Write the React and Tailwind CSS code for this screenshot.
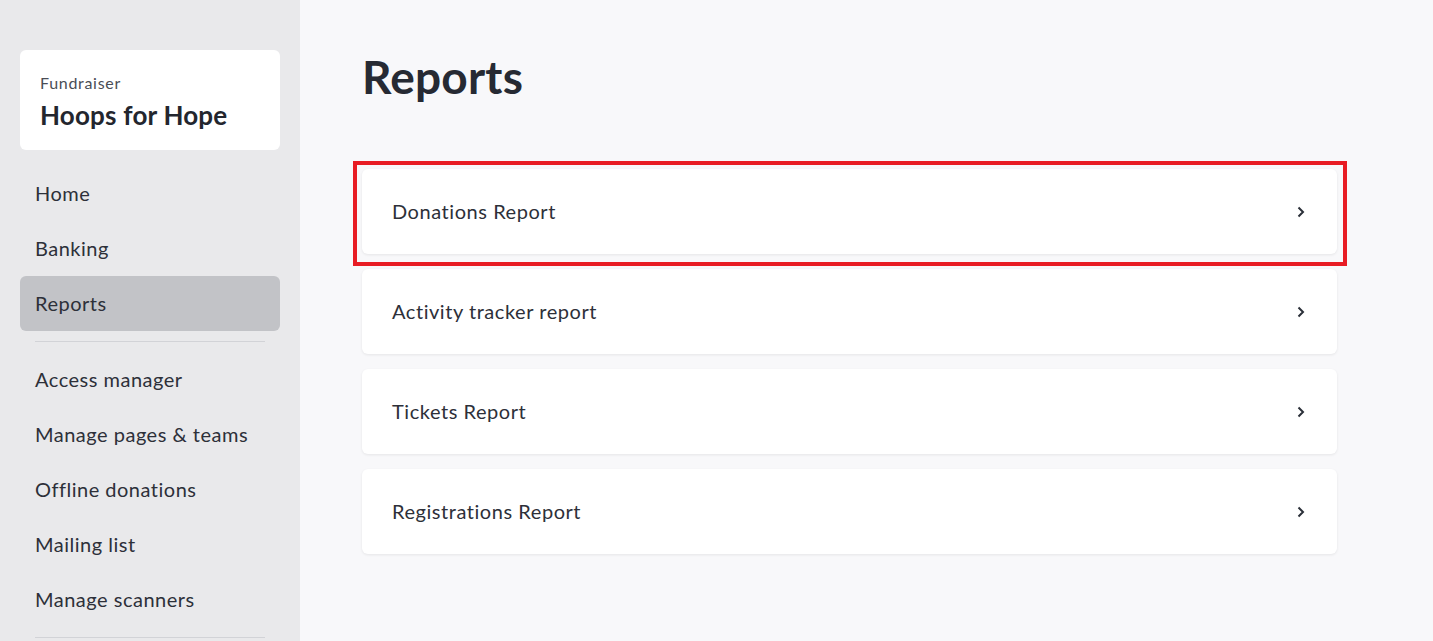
import React from 'react';

const navTop = ['Home', 'Banking', 'Reports'];
const navBottom = ['Access manager', 'Manage pages & teams', 'Offline donations', 'Mailing list', 'Manage scanners'];
const reports = ['Donations Report', 'Activity tracker report', 'Tickets Report', 'Registrations Report'];

const Chevron = () => (
  <svg width="8" height="12" viewBox="0 0 8 12" fill="none">
    <path d="M1.5 1.5L6 6l-4.5 4.5" stroke="#2a2f38" strokeWidth="2" />
  </svg>
);

const NavItem = ({ label, active }) => (
  <div
    className={`h-[55px] flex items-center px-[15px] pb-[2px] rounded-md text-[20px] tracking-[0.5px] text-[#2d3039] ${
      active ? 'bg-[#c2c3c7]' : ''
    }`}
  >
    {label}
  </div>
);

export default function App() {
  return (
    <div className="flex h-[641px] overflow-hidden font-['Lato',sans-serif]">
      {/* Sidebar */}
      <aside className="w-[300px] shrink-0 bg-[#e9e9eb] px-5 pt-[50px]">
        <div className="bg-white rounded-md h-[100px] px-5 pt-[24px]">
          <div className="text-[16px] tracking-[0.7px] text-[#4a4d55] leading-[18px]">Fundraiser</div>
          <div className="text-[26px] font-bold text-[#23262e] leading-[32px] mt-[7px] tracking-[0.2px]">Hoops for Hope</div>
        </div>
        <nav className="mt-[16px]">
          {navTop.map((item) => (
            <NavItem key={item} label={item} active={item === 'Reports'} />
          ))}
          <div className="mx-[15px] my-[10px] border-t border-[#d2d3d7]" />
          {navBottom.map((item) => (
            <NavItem key={item} label={item} />
          ))}
          <div className="mx-[15px] mt-[10px] border-t border-[#d2d3d7]" />
        </nav>
      </aside>

      {/* Main */}
      <main className="flex-1 bg-[#f8f8fa] pl-[62px] pr-[96px] pt-[50px]">
        <h1 className="text-[46px] font-bold text-[#262a33] leading-[54px] tracking-[0.2px]">Reports</h1>
        <div className="mt-[65px] flex flex-col gap-[15px]">
          {reports.map((r, i) => (
            <div
              key={r}
              className="relative h-[85px] bg-white rounded-md shadow-[0_1px_3px_rgba(0,0,0,0.08)] flex items-center justify-between pl-[30px] pr-[32px]"
            >
              <span className="text-[20px] tracking-[0.55px] text-[#2d3039] pb-[2px]">{r}</span>
              <Chevron />
              {i === 0 && (
                <div className="absolute -left-[9px] -right-[10px] -top-[8px] -bottom-[12px] border-4 border-[#e81c24] pointer-events-none" />
              )}
            </div>
          ))}
        </div>
      </main>
    </div>
  );
}
